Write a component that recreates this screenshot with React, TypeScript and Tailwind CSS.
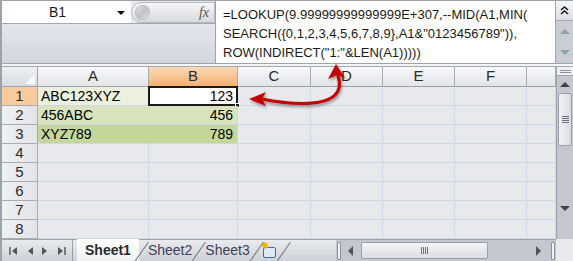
import React from 'react';

const cols = ['A', 'B', 'C', 'D', 'E', 'F', ''];
const colWidths = ['w-[111px]', 'w-[89px]', 'w-[73px]', 'w-[72px]', 'w-[72px]', 'w-[72px]', 'w-[29px]'];

const data: Record<number, { a: string; b: string; bg: string }> = {
  1: { a: 'ABC123XYZ', b: '123', bg: 'bg-[#ebf1de]' },
  2: { a: '456ABC', b: '456', bg: 'bg-[#d8e4bc]' },
  3: { a: 'XYZ789', b: '789', bg: 'bg-[#c4d79b]' },
};

function FormulaBar() {
  return (
    <div className="flex h-[63px] border-b border-[#9da3aa]">
      <div className="flex w-[213px] flex-col">
        <div className="flex h-[23px] items-center border-b border-[#a3a8ae]">
          <div className="relative flex h-full w-[129px] items-center justify-center bg-white text-[14px] text-[#1b1b1b]">
            <span className="-ml-[18px]">B1</span>
            <span className="absolute right-[6px] top-[10px] h-0 w-0 border-x-[4px] border-t-[4px] border-x-transparent border-t-black" />
          </div>
          <div className="flex h-[21px] flex-1 items-center justify-between rounded-l-full border border-[#b5b9bf] bg-gradient-to-b from-[#f7f7f8] to-[#d6d8dc] pl-[3px] pr-[5px]">
            <span className="h-[15px] w-[15px] rounded-full bg-gradient-to-br from-[#e6e7ea] via-[#bfc2c7] to-[#eceef0] shadow-[inset_0_0_2px_rgba(0,0,0,0.25)]" />
            <span className="font-['Liberation_Serif',serif] text-[14px] italic text-[#555]">fx</span>
          </div>
        </div>
        <div className="flex-1 bg-gradient-to-b from-[#e3e6ec] to-[#d3d6dd]" />
      </div>
      <div className="flex-1 border-l border-[#9da3aa] bg-white pl-[7px] pt-[4px] font-['Liberation_Sans',sans-serif] text-[13px] leading-[19px] text-[#1a1a1a]">
        <div>=LOOKUP(9.99999999999999E+307,--MID(A1,MIN(</div>
        <div>SEARCH({'{'}0,1,2,3,4,5,6,7,8,9{'}'},A1&amp;"0123456789")),</div>
        <div>ROW(INDIRECT("1:"&amp;LEN(A1)))))</div>
      </div>
      <div className="flex w-[18px] flex-col border-l border-[#9da3aa] bg-[#c9cdd5]">
        <div className="flex h-[20px] items-center justify-center border-b border-[#a5aab2] bg-gradient-to-b from-[#f4f5f7] to-[#dcdfe4]">
          <svg width="9" height="9" viewBox="0 0 9 9">
            <path d="M1 4 L4.5 1 L8 4 M1 8 L4.5 5 L8 8" stroke="#111" strokeWidth="1.4" fill="none" />
          </svg>
        </div>
        <div className="flex flex-1 flex-col items-center justify-around">
          <span className="h-0 w-0 border-x-[5px] border-b-[5px] border-x-transparent border-b-[#93a3a3]" />
          <span className="h-0 w-0 border-x-[5px] border-t-[5px] border-x-transparent border-t-[#93a3a3]" />
        </div>
      </div>
    </div>
  );
}

function VScroll() {
  return (
    <div className="flex w-[17px] flex-col border-l border-[#9da3aa] bg-[#c3c7cf]">
      <div className="flex h-[9px] items-center justify-center border-b border-[#9da3aa] bg-[#eef0f3]">
        <span className="h-[3px] w-[11px] border-y border-[#8c9197]" />
      </div>
      <div className="flex h-[17px] items-center justify-center">
        <span className="h-0 w-0 border-x-[5px] border-b-[5px] border-x-transparent border-b-[#3f4349]" />
      </div>
      <div className="mx-[1px] flex h-[53px] items-center justify-center rounded-[2px] border border-[#9aa0a8] bg-gradient-to-r from-[#f1f2f4] to-[#d9dce1]">
        <div className="flex flex-col gap-[1px]">
          <span className="h-px w-[7px] bg-[#6d7278]" />
          <span className="h-px w-[7px] bg-[#6d7278]" />
          <span className="h-px w-[7px] bg-[#6d7278]" />
          <span className="h-px w-[7px] bg-[#6d7278]" />
        </div>
      </div>
      <div className="flex-1" />
      <div className="flex h-[17px] items-center justify-center">
        <span className="h-0 w-0 border-x-[5px] border-t-[5px] border-x-transparent border-t-[#3f4349]" />
      </div>
      <div className="h-[22px]" />
    </div>
  );
}

function Grid() {
  const rows = [1, 2, 3, 4, 5, 6, 7, 8];
  return (
    <div className="flex flex-col">
      <div className="flex h-[20px] border-b border-[#9da3aa]">
        <div className="relative w-[36px] border-r border-[#a3a8ae] bg-gradient-to-b from-[#eef0f2] to-[#d8dbdf]">
          <span className="absolute bottom-[2px] right-[2px] h-0 w-0 border-b-[10px] border-l-[10px] border-b-[#fbfbfc] border-l-transparent" />
        </div>
        {cols.map((c, i) => (
          <div
            key={i}
            className={`${colWidths[i]} flex items-center justify-center border-r border-[#a7acb2] text-[15px] text-[#2b2b2b] ${
              c === 'B'
                ? 'bg-gradient-to-b from-[#f9d9b6] to-[#f5b071]'
                : 'bg-gradient-to-b from-[#f8f9fa] to-[#e2e4e8]'
            }`}
          >
            {c}
          </div>
        ))}
      </div>
      {rows.map((r) => {
        const d = data[r];
        return (
          <div key={r} className="flex h-[19px]">
            <div
              className={`flex w-[36px] items-center justify-center border-b border-r border-[#a7acb2] text-[15px] text-[#2b2b2b] ${
                r === 1 ? 'bg-[#f8cb9e]' : 'bg-gradient-to-r from-[#eef0f2] to-[#e2e4e8]'
              }`}
            >
              {r}
            </div>
            <div className={`w-[111px] border-b border-r border-[#d0d7e5] pl-[3px] text-[14px] leading-[18px] text-black ${d ? d.bg + ' border-r-transparent' : ''}`}>
              {d?.a}
            </div>
            <div
              className={`relative w-[89px] border-b border-r border-[#d0d7e5] pr-[4px] text-right text-[14px] leading-[18px] text-black ${
                d ? (r === 1 ? 'bg-white' : d.bg) : ''
              }`}
            >
              {d?.b}
              {r === 1 && (
                <>
                  <span className="absolute -left-[1px] -top-[1px] h-[20px] w-[90px] border-[2px] border-[#1a1a1a]" />
                  <span className="absolute -bottom-[3px] -right-[3px] h-[5px] w-[5px] border border-white bg-[#1a1a1a]" />
                </>
              )}
            </div>
            {colWidths.slice(2).map((w, i) => (
              <div key={i} className={`${w} border-b border-r border-[#d0d7e5]`} />
            ))}
          </div>
        );
      })}
    </div>
  );
}

function Tabs() {
  const sep = <span className="mx-[2px] h-[24px] w-px shrink-0 rotate-[35deg] bg-[#6f747b]" />;
  return (
    <div className="flex h-[22px] items-stretch border-t border-[#9da3aa] bg-gradient-to-b from-[#e9ebee] to-[#cdd1d7] text-[14px]">
      <div className="flex w-[71px] items-center justify-around border-r border-[#9aa0a8] px-[2px]">
        <svg width="9" height="8" viewBox="0 0 9 8"><path d="M1 0V8" stroke="#555" strokeWidth="1.4" /><path d="M8 0L3 4L8 8Z" fill="#555" /></svg>
        <svg width="6" height="8" viewBox="0 0 6 8"><path d="M6 0L1 4L6 8Z" fill="#555" /></svg>
        <svg width="6" height="8" viewBox="0 0 6 8"><path d="M0 0L5 4L0 8Z" fill="#555" /></svg>
        <svg width="9" height="8" viewBox="0 0 9 8"><path d="M1 0L6 4L1 8Z" fill="#555" /><path d="M8 0V8" stroke="#555" strokeWidth="1.4" /></svg>
      </div>
      <div className="-mt-px ml-[4px] flex items-center bg-gradient-to-b from-[#ffffff] to-[#eef0f2] px-[8px] font-bold text-[#2b2b2b]">
        Sheet1
      </div>
      {sep}
      <div className="flex items-center px-[4px] text-[#3f3f5a]">Sheet2</div>
      {sep}
      <div className="flex items-center px-[4px] text-[#3f3f5a]">Sheet3</div>
      {sep}
      <div className="relative flex w-[22px] items-center justify-center">
        <span className="mt-[3px] h-[11px] w-[13px] rounded-[2px] border border-[#4a6a9a] bg-[#dfe8f5]" />
        <span className="absolute left-[2px] top-[1px] text-[10px] leading-none text-[#f0b400]">✸</span>
      </div>
      {sep}
      <div className="flex-1" />
      <div className="flex w-[220px] items-center bg-[#c3c7cf]">
        <span className="ml-[1px] h-[18px] w-[4px] rounded-[1px] border border-[#8c9197] bg-[#f3f4f6]" />
        <span className="ml-[7px] h-0 w-0 border-y-[5px] border-r-[5px] border-y-transparent border-r-[#50555c]" />
        <div className="ml-[8px] flex h-[17px] w-[127px] items-center justify-center rounded-[2px] border border-[#9aa0a8] bg-gradient-to-b from-[#f4f5f7] to-[#d9dce1]">
          <div className="flex gap-[1px]">
            <span className="h-[7px] w-px bg-[#6d7278]" />
            <span className="h-[7px] w-px bg-[#6d7278]" />
            <span className="h-[7px] w-px bg-[#6d7278]" />
            <span className="h-[7px] w-px bg-[#6d7278]" />
          </div>
        </div>
        <div className="flex-1" />
        <span className="mr-[10px] h-0 w-0 border-y-[5px] border-l-[5px] border-y-transparent border-l-[#50555c]" />
        <span className="mr-[1px] h-[18px] w-[4px] rounded-[1px] border border-[#8c9197] bg-[#f3f4f6]" />
      </div>
    </div>
  );
}

export default function App() {
  return (
    <div className="relative h-[261px] w-[573px] overflow-hidden border-l-2 border-t border-[#9da3aa] bg-[#e7e9ed] font-['Liberation_Sans',sans-serif]">
      <FormulaBar />
      <div className="h-[3px] border-b border-[#a3a8ae] bg-[#f3f4f6]" />
      <div className="flex">
        <div className="flex flex-col">
          <Grid />
        </div>
        <VScroll />
      </div>
      <div className="absolute bottom-0 left-0 right-[17px]">
        <Tabs />
      </div>
      <svg className="pointer-events-none absolute left-[-2px] top-[-1px]" width="573" height="261" viewBox="0 0 573 261">
        <defs>
          <filter id="sh" x="-20%" y="-20%" width="140%" height="140%">
            <feDropShadow dx="1" dy="2" stdDeviation="1.5" floodColor="#000" floodOpacity="0.4" />
          </filter>
        </defs>
        <g filter="url(#sh)">
          <path d="M262 99 C287 104, 320 107, 334 96 C341 90, 340 82, 338 76" stroke="#c40000" strokeWidth="3" fill="none" strokeLinecap="round" />
          <path d="M249 99 L266 92 L262 99 L266 106 Z" fill="#c40000" />
          <path d="M336 64 L345 78 L337 75 L328 79 Z" fill="#c40000" />
        </g>
      </svg>
    </div>
  );
}
